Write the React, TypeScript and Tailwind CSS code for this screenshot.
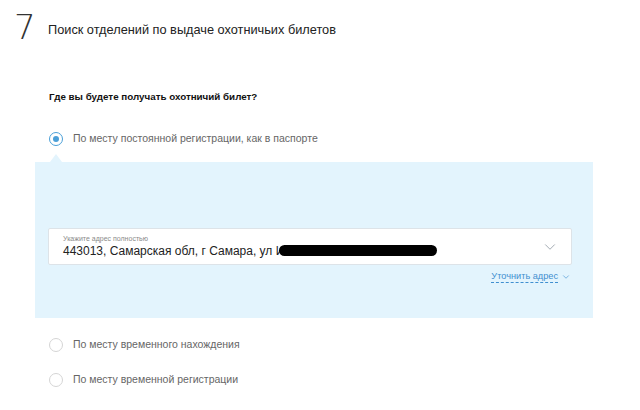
import { ChevronDown } from 'lucide-react';

function Radio({ checked, label }: { checked?: boolean; label: string }) {
  return (
    <div className="flex items-center h-[14px]">
      <div
        className={`w-[14px] h-[14px] rounded-full border flex items-center justify-center ${
          checked ? 'border-[#4a9fd8] border-[1.5px]' : 'border-[#d5d5d5]'
        }`}
      >
        {checked && <div className="w-[6px] h-[6px] rounded-full bg-[#4a9fd8]" />}
      </div>
      <span className="ml-[10px] text-[10.5px] text-[#666]">{label}</span>
    </div>
  );
}

export default function App() {
  return (
    <div
      className="w-[640px] h-[410px] bg-white overflow-hidden relative"
      style={{ fontFamily: '"Liberation Sans", Arial, sans-serif' }}
    >
      {/* Заголовок шага */}
      <div className="flex items-end pl-[14px] pt-[10px]">
        <span
          className="text-[34px] leading-[34px] text-[#333] w-[34px]"
          style={{ fontFamily: '"DejaVu Sans", sans-serif', fontWeight: 200 }}
        >
          7
        </span>
        <span className="text-[12.75px] leading-[19px] text-[#222] mb-[5px]">Поиск отделений по выдаче охотничьих билетов</span>
      </div>

      <div className="pl-[49px] pt-[45px] text-[9.8px] leading-[16px] font-bold text-[#111]">
        Где вы будете получать охотничий билет?
      </div>

      <div className="pl-[49px] pt-[27px]">
        <Radio checked label="По месту постоянной регистрации, как в паспорте" />
      </div>

      {/* Панель с адресом */}
      <div className="relative ml-[35px] mr-[47px] mt-[16px] h-[156px] bg-[#e3f4fd] pt-[66px] pl-[13px] pr-[21px]">
        <div className="absolute -top-[8px] left-[15px] w-0 h-0 border-l-[6px] border-r-[6px] border-b-[8px] border-l-transparent border-r-transparent border-b-[#e3f4fd]" />
        <div className="h-[37px] bg-white border border-[#dde3e8] rounded-[2px] flex items-center pl-[2px] pr-[12px]">
          <div className="flex-1 flex flex-col pl-[12px]">
            <span className="text-[7px] leading-[8px] text-[#8a8a8a]">Укажите адрес полностью</span>
            <span className="text-[12px] leading-[16px] text-[#222] flex items-center">
              443013, Самарская обл, г Самара, ул И
              <span className="inline-block w-[158px] h-[11px] bg-black rounded-full -ml-[5px]" />
            </span>
          </div>
          <ChevronDown size={18} strokeWidth={1.2} className="text-[#9aa3ab]" />
        </div>
        <div className="flex justify-end items-center mt-[5px] pr-[1px]">
          <span className="text-[9.2px] text-[#3f8fd0] border-b border-dashed border-[#3f8fd0] leading-[12px]">
            Уточнить адрес
          </span>
          <ChevronDown size={10} strokeWidth={1.5} className="text-[#3f8fd0] ml-[3px]" />
        </div>
      </div>

      <div className="pl-[49px] pt-[20px] flex flex-col gap-[21px]">
        <Radio label="По месту временного нахождения" />
        <Radio label="По месту временной регистрации" />
      </div>
    </div>
  );
}
